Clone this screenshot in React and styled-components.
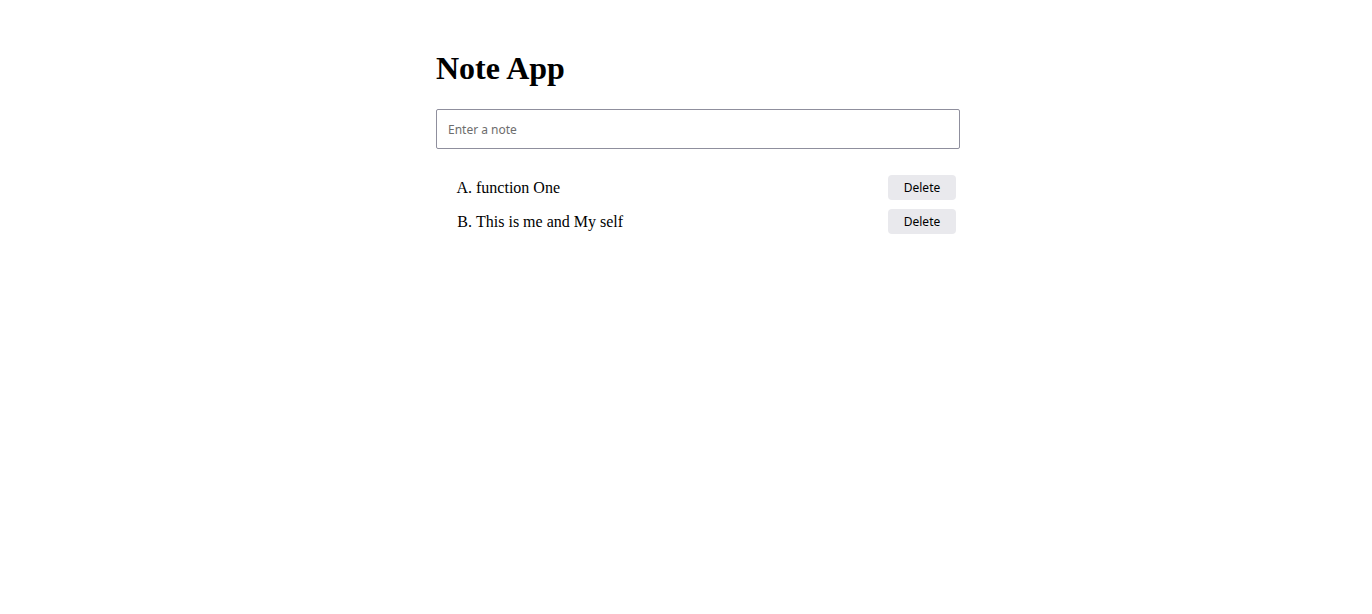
import React, { useState } from 'react'
import styled, { createGlobalStyle } from 'styled-components';

const GlobalStyle = createGlobalStyle`
  body {
    margin: 0;
    background: #fff;
    font-family: "Liberation Serif", "Times New Roman", serif;
    color: #000;
  }
`;

const Page = styled.main`
  width: 524px;
  margin-left: calc(50% - 250px);
  padding-top: 50px;
`;

const Title = styled.h1`
  margin: 0 0 22px;
  font-size: 32px;
  font-weight: 700;
  line-height: 37px;
`;

const NoteInput = styled.input`
  box-sizing: border-box;
  display: block;
  width: 100%;
  height: 40px;
  padding: 0 11px;
  border: 1px solid #8f8f9d;
  border-radius: 2px;
  font-family: "Noto Sans", "Open Sans", sans-serif;
  font-size: 12px;
  color: #000;
  outline: none;
  &::placeholder{
    color: #6d6d6d;
  }
`;

const NoteList = styled.ol`
  list-style: upper-alpha;
  margin: 26px 0 0;
  padding: 0 4px 0 40px;
  font-size: 16px;
`;

const NoteItem = styled.li`
  margin-bottom: 9px;
`;

const Row = styled.div`
  display: flex;
  justify-content: space-between;
  align-items: center;
  min-height: 25px;
`;

const DeleteButton = styled.button`
  width: 68px;
  height: 25px;
  border: none;
  border-radius: 4px;
  background: #e9e9ed;
  color: #000;
  font-family: "Noto Sans", "Open Sans", sans-serif;
  font-size: 12px;
  cursor: pointer;
`;

function App() {
  const [notes, setNotes] = useState(['function One', 'This is me and My self']);

  return (
    <>
      <GlobalStyle />
      <Page>
        <Title>Note App</Title>
        <NoteInput placeholder='Enter a note' />
        <NoteList>
          {notes.map((note, i) => (
            <NoteItem key={i}>
              <Row>
                <span>{note}</span>
                <DeleteButton onClick={() => setNotes(notes.filter((_, j) => j !== i))}>Delete</DeleteButton>
              </Row>
            </NoteItem>
          ))}
        </NoteList>
      </Page>
    </>
  )
}

export default App
